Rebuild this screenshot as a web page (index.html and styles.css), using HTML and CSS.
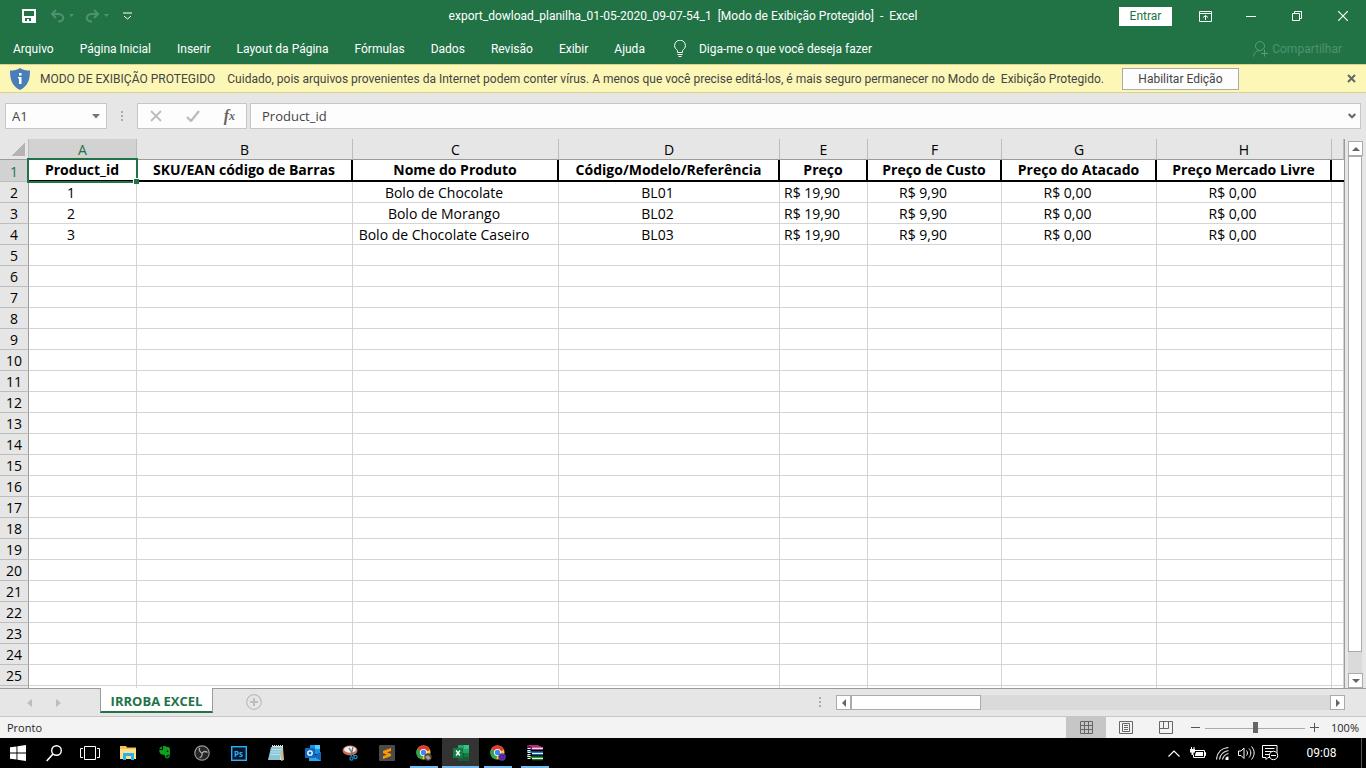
FILE: index.html
```html
<!DOCTYPE html>
<html lang="pt-BR">
<head>
<meta charset="utf-8">
<title>export_dowload_planilha_01-05-2020_09-07-54_1 - Excel</title>
<link rel="stylesheet" href="styles.css">
</head>
<body>
<div class="screen">
  <header class="titlebar">
    <div class="quick">
      <button class="icon-btn save" aria-label="Salvar"><svg width="14" height="14" viewBox="0 0 14 14"><path fill="#fff" fill-rule="evenodd" d="M0 0h14v14H1l-1-1zM2 2v5h10V2zM3 9v3h2v-2h2v2h2V9z"/></svg></button>
      <button class="icon-btn undo" aria-label="Desfazer"><svg width="25" height="14" viewBox="0 0 25 14"><path d="M6 1 2 5l4 4M2 5h6c7 0 7 8 0 7.500" fill="none" stroke="#4f9270" stroke-width="2"/><path d="M19 5h5l-2.500 3z" fill="#4f9270"/></svg></button>
      <button class="icon-btn redo" aria-label="Refazer"><svg width="25" height="14" viewBox="0 0 25 14"><path d="M9 1l4 4-4 4M13 5H7c-7 0-7 8 0 7.500" fill="none" stroke="#4f9270" stroke-width="2"/><path d="M19 5h5l-2.500 3z" fill="#4f9270"/></svg></button>
      <button class="icon-btn custom" aria-label="Personalizar"><svg width="9" height="8" viewBox="0 0 9 8"><path d="M0 1h9M1 4l3.500 3L8 4" fill="none" stroke="#fff"/></svg></button>
    </div>
    <h1 class="doc-title">export_dowload_planilha_01-05-2020_09-07-54_1 &nbsp;[Modo de Exibição Protegido] &nbsp;- &nbsp;Excel</h1>
    <div class="window-tools">
      <button class="signin">Entrar</button>
      <button class="win-btn" aria-label="Opções da faixa"><svg width="13" height="11" viewBox="0 0 13 11"><path d="M.5.500h12v10H.500zM.500 2.500h12M6.500 9V4.500M4 6.500l2.500-2L9 6.500" fill="none" stroke="#fff"/></svg></button>
      <button class="win-btn" aria-label="Minimizar"><svg width="10" height="10" viewBox="0 0 10 10"><path d="M0 5.500h10" stroke="#fff"/></svg></button>
      <button class="win-btn" aria-label="Restaurar"><svg width="10" height="10" viewBox="0 0 10 10"><path d="M.5 2.500h7v7h-7zM2.500 2.500v-2h7v7h-2" fill="none" stroke="#fff"/></svg></button>
      <button class="win-btn" aria-label="Fechar"><svg width="10" height="10" viewBox="0 0 10 10"><path d="M0 0l10 10M10 0L0 10" stroke="#fff" stroke-width="1.200"/></svg></button>
    </div>
  </header>

  <nav class="ribbon">
    <button class="tab">Arquivo</button>
    <button class="tab">Página Inicial</button>
    <button class="tab">Inserir</button>
    <button class="tab">Layout da Página</button>
    <button class="tab">Fórmulas</button>
    <button class="tab">Dados</button>
    <button class="tab">Revisão</button>
    <button class="tab">Exibir</button>
    <button class="tab">Ajuda</button>
    <button class="tab tell"><svg width="12" height="17" viewBox="0 0 12 17"><path d="M3.500 12.500V10.500C2 9 .600 8 .600 5.500a5.200 5.200 0 0 1 10.800 0C11.400 8 10 9 8.500 10.500v2zM3.500 14.500h5M4.500 16.500h3" fill="none" stroke="#fff"/></svg>Diga-me o que você deseja fazer</button>
    <button class="share" disabled><svg width="15" height="16" viewBox="0 0 15 16"><circle cx="7" cy="5" r="4.500" fill="none" stroke="#5b9a7a"/><path d="M.5 15.500C1 12 3 10 6 9.500M11.500 8.500v7M8 12.500h7" fill="none" stroke="#5b9a7a"/></svg>Compartilhar</button>
  </nav>

  <div class="notice">
    <svg class="shield" width="20" height="22" viewBox="0 0 20 22"><path d="M10 0c3 2 6 2.500 10 2.500C20 12 18 18 10 22 2 18 0 12 0 2.500 4 2.500 7 2 10 0z" fill="#4a7ebb"/><path d="M9 5h2.500v2.500H9zM8 9h3.500v7H9v-5.500H8z" fill="#fff"/></svg>
    <span class="notice-title">MODO DE EXIBIÇÃO PROTEGIDO</span>
    <span class="notice-text">Cuidado, pois arquivos provenientes da Internet podem conter vírus. A menos que você precise editá-los, é mais seguro permanecer no Modo de &nbsp;Exibição Protegido.</span>
    <button class="enable">Habilitar Edição</button>
    <button class="notice-close" aria-label="Fechar aviso"><svg width="9" height="9" viewBox="0 0 9 9"><path d="M1 1l7 7M8 1L1 8" stroke="#666" stroke-width="2"/></svg></button>
  </div>

  <div class="formula-row">
    <div class="namebox"><input class="name-input" type="text" value="A1" aria-label="Caixa de nome"><button class="icon-btn" aria-label="Abrir lista"><svg width="8" height="5" viewBox="0 0 8 5"><path d="M0 0h8L4 4.500z" fill="#777"/></svg></button></div>
    <span class="dots"></span>
    <div class="fx-box">
      <button class="icon-btn" aria-label="Cancelar"><svg width="12" height="12" viewBox="0 0 12 12"><path d="M1 1l10 10M11 1L1 11" stroke="#bdbdbd" stroke-width="1.800"/></svg></button>
      <button class="icon-btn" aria-label="Inserir"><svg width="14" height="12" viewBox="0 0 14 12"><path d="M1 7l4 4 8-10" fill="none" stroke="#bdbdbd" stroke-width="2.400"/></svg></button>
      <button class="icon-btn fx" aria-label="Inserir função">f<small>x</small></button>
    </div>
    <div class="formula"><input class="formula-input" type="text" value="Product_id" aria-label="Barra de fórmulas"><button class="icon-btn" aria-label="Expandir"><svg width="8" height="6" viewBox="0 0 8 6"><path d="M.7 1L4 4.300 7.300 1" fill="none" stroke="#666" stroke-width="2"/></svg></button></div>
  </div>

  <main class="work">
    <div class="grid-view">
      <table class="sheet">
        <colgroup><col class="c-n"><col class="c-a"><col class="c-b"><col class="c-c"><col class="c-d"><col class="c-e"><col class="c-f"><col class="c-g"><col class="c-h"><col></colgroup>
        <thead><tr><th class="corner"></th><th class="on">A</th><th>B</th><th>C</th><th>D</th><th>E</th><th>F</th><th>G</th><th>H</th><th></th></tr></thead>
        <tbody id="rows">
          <tr class="titles"><th class="on">1</th><td class="selected">Product_id<span class="handle"></span></td><td>SKU/EAN código de Barras</td><td>Nome do Produto</td><td>Código/Modelo/Referência</td><td>Preço</td><td>Preço de Custo</td><td>Preço do Atacado</td><td>Preço Mercado Livre</td><td></td></tr>
          <tr><th>2</th><td>1</td><td></td><td>Bolo de Chocolate</td><td>BL01</td><td>R$ 19,90</td><td>R$ 9,90</td><td>R$ 0,00</td><td>R$ 0,00</td><td></td></tr>
          <tr><th>3</th><td>2</td><td></td><td>Bolo de Morango</td><td>BL02</td><td>R$ 19,90</td><td>R$ 9,90</td><td>R$ 0,00</td><td>R$ 0,00</td><td></td></tr>
          <tr><th>4</th><td>3</td><td></td><td>Bolo de Chocolate Caseiro</td><td>BL03</td><td>R$ 19,90</td><td>R$ 9,90</td><td>R$ 0,00</td><td>R$ 0,00</td><td></td></tr>
        </tbody>
      </table>
    </div>
    <div class="vscroll">
      <button class="sb-btn" aria-label="Acima"><svg width="8" height="4" viewBox="0 0 8 4"><path d="M0 4h8L4 0z" fill="#666"/></svg></button>
      <div class="v-track"><div class="v-thumb"></div></div>
      <button class="sb-btn" aria-label="Abaixo"><svg width="8" height="4" viewBox="0 0 8 4"><path d="M0 0h8L4 4z" fill="#666"/></svg></button>
    </div>
  </main>

  <div class="sheetbar">
    <div class="sheet-nav"><svg width="5" height="8" viewBox="0 0 5 8"><path d="M5 0v8L0 4z" fill="#bdbdbd"/></svg><svg width="5" height="8" viewBox="0 0 5 8"><path d="M0 0v8l5-4z" fill="#bdbdbd"/></svg></div>
    <button class="sheet-tab">IRROBA EXCEL</button>
    <button class="icon-btn add" aria-label="Nova planilha"><svg width="16" height="16" viewBox="0 0 16 16"><circle cx="8" cy="8" r="7.300" fill="none" stroke="#bdbdbd" stroke-width="1.200"/><path d="M8 4v8M4 8h8" stroke="#bdbdbd" stroke-width="2"/></svg></button>
    <span class="dots"></span>
    <div class="hscroll">
      <button class="sb-btn" aria-label="Esquerda"><svg width="4" height="8" viewBox="0 0 4 8"><path d="M4 0v8L0 4z" fill="#666"/></svg></button>
      <div class="h-track"><div class="h-thumb"></div></div>
      <button class="sb-btn" aria-label="Direita"><svg width="4" height="8" viewBox="0 0 4 8"><path d="M0 0v8l4-4z" fill="#666"/></svg></button>
    </div>
  </div>

  <footer class="status">
    <span class="ready">Pronto</span>
    <button class="view active" aria-label="Normal"><svg width="13" height="13" viewBox="0 0 13 13"><path d="M.5.500h12v12H.500zM4.500 0v13M8.500 0v13M0 4.500h13M0 8.500h13" fill="none" stroke="#666"/></svg></button>
    <button class="view" aria-label="Layout da Página"><svg width="14" height="13" viewBox="0 0 14 13"><path d="M.5.500h13v12H.500zM3.500 2.500h7v8h-7zM5 4.500h4M5 6.500h4M5 8.500h4" fill="none" stroke="#666"/></svg></button>
    <button class="view" aria-label="Quebra de Página"><svg width="14" height="13" viewBox="0 0 14 13"><path d="M.5.500h13v12H.500zM4.500 0v7.500M9.500 0v7.500M0 7.500h9.500" fill="none" stroke="#666"/></svg></button>
    <button class="zoom-btn" aria-label="Reduzir"><svg width="9" height="9" viewBox="0 0 9 9"><path d="M0 4.500h9" stroke="#555"/></svg></button>
    <input class="zoom" type="range" min="0" max="100" value="51" aria-label="Zoom">
    <button class="zoom-btn" aria-label="Ampliar"><svg width="9" height="9" viewBox="0 0 9 9"><path d="M0 4.500h9M4.500 0v9" stroke="#555"/></svg></button>
    <span class="zoom-value">100%</span>
  </footer>

  <div class="taskbar">
    <div class="system">
      <button class="task" aria-label="Iniciar"><svg width="16" height="16" viewBox="0 0 16 16"><path d="M0 2.300L6.500 1.400V7.600H0zM7.400 1.200L16 0v7.600H7.400zM0 8.400h6.500v6.200L0 13.700zM7.400 8.400H16V16l-8.600-1.200z" fill="#fff"/></svg></button>
      <button class="task" aria-label="Pesquisar"><svg width="16" height="17" viewBox="0 0 16 17"><circle cx="10.500" cy="5.500" r="4.800" fill="none" stroke="#fff" stroke-width="1.400"/><path d="M7 9L.700 16" stroke="#fff" stroke-width="1.600"/></svg></button>
      <button class="task" aria-label="Visão de tarefas"><svg width="20" height="14" viewBox="0 0 20 14"><path d="M4.500.500h11v13h-11zM3 2.500H.500v9H3M17 2.500h2.500v9H17" fill="none" stroke="#fff"/></svg></button>
    </div>
    <button class="task" aria-label="Explorador"><svg width="16" height="14" viewBox="0 0 16 14"><path d="M0 0h6l1 1.500h9V13H0z" fill="#f5c24a"/><path d="M0 3h16v10H0z" fill="#ffe08a"/><path d="M3 7h11v7h-3v-4H6v4H3z" fill="#25b3ee"/></svg></button>
    <button class="task" aria-label="Evernote"><svg width="12" height="14" viewBox="0 0 12 14"><path d="M4 0h2.500l1 1h2C11 1.500 11 3 11 6c0 3-.5 6.500-2.500 6.500C6.500 12.500 6 11.500 6 9.500 5 8.500 4 9 2.500 8.500 1 8 .2 6 .2 4H4z" fill="#0ea01c"/><path d="M0 3l3-3v3z" fill="#0ea01c"/><path d="M10 9.500c-1.500-.8-2.500 0-2.300 1.300h1.500" fill="none" stroke="#000" stroke-width=".8"/><circle cx="8.500" cy="5.300" r=".8" fill="#000"/></svg></button>
    <button class="task" aria-label="OBS"><svg width="16" height="16" viewBox="0 0 16 16"><circle cx="8" cy="8" r="7.200" fill="#252525" stroke="#999" stroke-width="1.200"/><path d="M5.500 2.800C5 5 6 7 8 8c1.500-1.500 3.500-2 5.500-.5M8 8c.5 2.200-.5 4-2.500 5" fill="none" stroke="#aaa" stroke-width="1.300"/></svg></button>
    <button class="task" aria-label="Photoshop"><svg width="16" height="15" viewBox="0 0 16 15"><rect x=".7" y=".7" width="14.600" height="13.600" fill="#07162c" stroke="#2cb1f2" stroke-width="1.400"/><text x="3" y="11" class="ps">Ps</text></svg></button>
    <button class="task" aria-label="Bloco de notas"><svg width="16" height="16" viewBox="0 0 16 16"><path d="M4 1h11v14H5z" fill="#f3ecd2"/><path d="M15 2l1 13-3 1V6z" fill="#cdb88c"/><path d="M3 2h11l-2 13H0z" fill="#8bc5d8"/><path d="M3.500 4.500h10M3 7h10M2.500 9.500h10" stroke="#b9e2ed"/><path d="M4 1h12" stroke="#ddd" stroke-width="2" stroke-dasharray="1 1"/></svg></button>
    <button class="task" aria-label="Outlook"><svg width="16" height="16" viewBox="0 0 16 16"><path d="M5 0h10v9H5z" fill="#1b8fe0"/><path d="M10 0h5v4h-5z" fill="#50d0ff"/><path d="M4 7l6 4 6-4v9H4z" fill="#2aa5ea"/><path d="M16 7v9L8 11z" fill="#1467b8"/><path d="M0 3h10v10H0z" fill="#0e69c4"/><circle cx="5" cy="8" r="2.200" fill="none" stroke="#fff" stroke-width="1.300"/></svg></button>
    <button class="task" aria-label="Captura"><svg width="16" height="16" viewBox="0 0 16 16"><ellipse cx="8" cy="5.500" rx="7.500" ry="5" fill="#c96b54"/><ellipse cx="8" cy="4.500" rx="6" ry="3.200" fill="#eee"/><path d="M7 3l5 8M11 2l-2 9" stroke="#777" stroke-width="1.300"/><circle cx="9.500" cy="13.500" r="1.600" fill="none" stroke="#128dd0" stroke-width="1.200"/><circle cx="13.500" cy="12" r="1.600" fill="none" stroke="#128dd0" stroke-width="1.200"/></svg></button>
    <button class="task" aria-label="Sublime"><svg width="16" height="16" viewBox="0 0 16 16"><rect width="16" height="16" rx="1" fill="#4b4b4b"/><path d="M12 3v3L8 7.300 12 9v2l-8 3v-3l4-1.300L4 8V6z" fill="#ff9800"/></svg></button>
    <button class="task open" aria-label="Chrome"><svg width="16" height="16" viewBox="0 0 16 16"><circle cx="7.500" cy="7.500" r="7" fill="#fbc928"/><path d="M7.500 7.500L1.200 4A7 7 0 0 1 14 5z" fill="#e33b2e"/><path d="M7.500 7.500L1.200 4a7 7 0 0 0 5.300 10.500z" fill="#2da44e"/><circle cx="7.500" cy="7.500" r="3.600" fill="#fff"/><circle cx="7.500" cy="7.500" r="2.700" fill="#4285f4"/><circle cx="12" cy="12" r="3.700" fill="#4d443f"/><path d="M9 12l3-2 3 3-3 2z" fill="#b09b8e"/></svg></button>
    <button class="task open current" aria-label="Excel"><svg width="16" height="16" viewBox="0 0 16 16"><path d="M5 0h11v16H5z" fill="#21a366"/><path d="M5 0h6v4H5z" fill="#26a56b"/><path d="M11 0h5v4h-5z" fill="#33c481"/><path d="M5 8h11v8H5z" fill="#185c37"/><path d="M11 8h5v4h-5z" fill="#107c41"/><path d="M0 3h10v10H0z" fill="#107c41"/><path d="M3 5.500l4 5M7 5.500l-4 5" stroke="#fff" stroke-width="1.400"/></svg></button>
    <button class="task open" aria-label="Chrome"><svg width="16" height="16" viewBox="0 0 16 16"><circle cx="7.500" cy="7.500" r="7" fill="#fbc928"/><path d="M7.500 7.500L1.200 4A7 7 0 0 1 14 5z" fill="#e33b2e"/><path d="M7.500 7.500L1.200 4a7 7 0 0 0 5.300 10.500z" fill="#2da44e"/><circle cx="7.500" cy="7.500" r="3.600" fill="#fff"/><circle cx="7.500" cy="7.500" r="2.700" fill="#4285f4"/><circle cx="12" cy="12" r="3.700" fill="#5b36b0"/><circle cx="12" cy="12" r="1.800" fill="none" stroke="#3f2390"/></svg></button>
    <button class="task open" aria-label="WinRAR"><svg width="16" height="16" viewBox="0 0 16 16"><path d="M0 0h11l5 2.500H5z" fill="#b52a7c"/><path d="M0 0l5 2.500V5L0 3z" fill="#7a1750"/><path d="M5 2.500h11V4H5z" fill="#f2d9e6"/><path d="M5 4h11v1H5z" fill="#b52a7c"/><path d="M0 5l5 1.500h11V8H5L0 7z" fill="#1e7fd0"/><path d="M5 8h11v1.300H5z" fill="#e3f1ff"/><path d="M5 9.300h11v1H5z" fill="#1668b8"/><path d="M0 10l5 1.500h11V13H5l-5-1z" fill="#2f9a34"/><path d="M5 13h11v1.300H5z" fill="#e6f7e0"/><path d="M5 14.300h11v1H5z" fill="#1f7a24"/><path d="M2 3v12" stroke="#fff" stroke-width="3" stroke-dasharray="1 1"/></svg></button>

    <div class="tray">
      <button class="tray-btn" aria-label="Ícones ocultos"><svg width="12" height="7" viewBox="0 0 12 7"><path d="M.5 6.500L6 1l5.500 5.500" fill="none" stroke="#fff" stroke-width="1.200"/></svg></button>
      <button class="tray-btn" aria-label="Bateria"><svg width="16" height="12" viewBox="0 0 16 12"><path d="M4.500 3.500h10v7H3.500V8M14.500 5.500h1v3h-1" fill="none" stroke="#fff"/><path d="M6 5h7v4H5V8zM0 2h5v3.500H3.500V8h-2V5.500H0zM1 0h1v2H1zM3.500 0h1v2h-1z" fill="#fff"/></svg></button>
      <button class="tray-btn" aria-label="Rede"><svg width="13" height="13" viewBox="0 0 13 13"><path d="M.5 12.500C1 5 6 1 12.500.500M3.500 12.500C4 7 8 4.500 12.500 3.500M6.500 12.500C7 9.500 9 7.500 12.500 6.500" fill="none" stroke="#ddd" stroke-width="1.200"/><path d="M9.500 13V11c.500-1 1.500-1.500 3-1.500V13z" fill="#fff"/></svg></button>
      <button class="tray-btn" aria-label="Volume"><svg width="17" height="14" viewBox="0 0 17 14"><path d="M.5 5h2.500l3-3v10.500l-3-3H.500zM8.500 4.500c1.300 1.500 1.300 3.500 0 5M11 2.500c2.400 2.500 2.400 6.500 0 9M13.500.500c3.500 4 3.500 9 0 13" fill="none" stroke="#fff"/></svg></button>
      <button class="tray-btn" aria-label="Notificações"><svg width="17" height="16" viewBox="0 0 17 16"><path d="M8 12.500H6l-2 2v-2H.500V.500h14.500V8M3 3.500h9.500M3 6.500h7M3 9.500h4" fill="none" stroke="#fff"/><circle cx="11.500" cy="10.500" r="4.200" fill="#000" stroke="#fff"/><path d="M9 10.500h5" stroke="#fff"/></svg></button>
      <time class="clock">09:08</time>
      <span class="peek"></span>
    </div>
  </div>
</div>
<script src="sheet.js"></script>
</body>
</html>
```

FILE: sheet.js
```js
// Fill the rest of the sheet with empty rows; the last one only peeks out.
const rows = document.getElementById("rows");
for (let n = 5; n <= 26; n++) {
  const tr = document.createElement("tr");
  const th = document.createElement("th");
  if (n < 26) th.textContent = n;
  tr.append(th);
  for (let c = 0; c < 9; c++) tr.append(document.createElement("td"));
  rows.append(tr);
}
```

FILE: styles.css
```css
* { box-sizing: border-box; }
body {
  margin: 0;
  font-family: Roboto, "Open Sans", sans-serif;
  font-size: 12px;
  color: #262626;
}
button, input {
  font: inherit;
  color: inherit;
  margin: 0;
  padding: 0;
  border: 0;
  background: none;
  white-space: nowrap;
}
svg { display: block; flex: none; }
.screen { height: 100vh; display: flex; flex-direction: column; overflow: hidden; background: #e6e6e6; }
.screen > * { flex: none; }
.icon-btn { display: flex; align-items: center; justify-content: center; }

/* title bar */
.titlebar { height: 32px; background: #217346; color: #fff; display: grid; grid-template-columns: 1fr auto 1fr; align-items: center; }
.quick { display: flex; align-items: center; padding-left: 22px; }
.save { margin-right: 14px; }
.undo { margin-right: 10px; }
.redo { margin-right: 13px; }
.doc-title { margin: 0; font-size: 12px; font-weight: 400; white-space: nowrap; }
.window-tools { display: flex; align-items: center; justify-content: flex-end; }
.signin { width: 53px; height: 19px; background: #fff; color: #217346; margin-right: 10px; }
.win-btn { width: 46px; height: 32px; display: flex; align-items: center; justify-content: center; }

/* ribbon tabs */
.ribbon { height: 32px; background: #217346; color: #fff; display: flex; align-items: center; gap: 26px; padding: 1px 24px 0 13px; }
.tell { display: flex; align-items: center; gap: 13px; margin-left: 3px; }
.share { display: flex; align-items: center; gap: 4px; margin-left: auto; color: #4f9270; }

/* protected view notice */
.notice { height: 29px; background: #fcf7b6; border-top: 1px solid #d8d58a; border-bottom: 1px solid #d8d58a; display: flex; align-items: center; padding: 0 10px; color: #444; white-space: nowrap; }
.shield { margin-right: 10px; }
.notice-title { margin-right: 12px; }
.enable { width: 117px; height: 22px; border: 1px solid #ababab; background: #fdfdfd; margin-left: 18px; }
.notice-close { margin-left: auto; }

/* formula bar */
.formula-row { display: flex; align-items: center; padding: 10px 5px; color: #444; font-family: "Open Sans", "Noto Sans", sans-serif; }
.namebox, .fx-box, .formula { height: 26px; background: #fdfdfd; border: 1px solid #c6c6c6; display: flex; align-items: center; }
.namebox { width: 102px; padding: 0 6px; }
.name-input { flex: 1; min-width: 0; font-size: 13px; }
.dots { width: 2px; height: 11px; background: repeating-linear-gradient(#ababab 0 2px, transparent 2px 4px); }
.formula-row .dots { margin: 0 14px; }
.fx-box { width: 110px; justify-content: space-between; padding: 0 11px 0 12px; margin-right: 3px; }
.fx { font-family: "Liberation Serif", serif; font-style: italic; font-weight: 700; font-size: 16px; color: #666; }
.fx small { font-size: 12px; }
.formula { flex: 1; padding: 0 4px 0 11px; }
.formula-input { flex: 1; min-width: 0; font-size: 13px; }

/* worksheet */
.work.work { flex: 1; min-height: 0; display: flex; }
.grid-view { flex: 1; min-width: 0; overflow: hidden; border-right: 1px solid #9b9b9b; }
.sheet { width: 100%; table-layout: fixed; border-collapse: separate; border-spacing: 0; font-family: "Open Sans", "Noto Sans", sans-serif; font-size: 14px; line-height: 19px; color: #000; }
.c-n { width: 29px; }
.c-a { width: 108px; }
.c-b { width: 216px; }
.c-c { width: 206px; }
.c-d { width: 221px; }
.c-e { width: 88px; }
.c-f { width: 134px; }
.c-g { width: 155px; }
.c-h { width: 175px; }
.sheet th, .sheet td { height: 21px; padding: 1px 0 0; text-align: center; white-space: nowrap; border-right: 1px solid #d4d4d4; border-bottom: 1px solid #d4d4d4; }
.sheet th { font-weight: 400; background: #e6e6e6; border-color: #bdbdbd; }
.sheet td { background: #fff; padding-right: 23px; }
.sheet tbody th { border-right-color: #9b9b9b; }
.sheet thead th { border-bottom-color: #9b9b9b; }
.sheet .on { background: #d2d2d2; color: #217346; }
.sheet .corner { background: linear-gradient(135deg, transparent 50%, #b4b4b4 50%) 12px 4px / 13px 13px no-repeat #e6e6e6; }
.sheet .titles td { height: 22px; padding: 0; vertical-align: top; font-weight: 700; border-right: 2px solid #000; border-bottom: 2px solid #000; }
.sheet .titles td:last-child { border-right: 0; }
.sheet .titles .selected { position: relative; border-right-color: #fff; }
.selected::before { content: ""; position: absolute; inset: -2px -3px -3px -2px; border: 2px solid #217346; }
.handle { position: absolute; right: -4px; bottom: -4px; width: 6px; height: 6px; background: #217346; border: 1px solid #fff; border-width: 1px 0 0 1px; }

/* scroll bars */
.vscroll { width: 21px; padding: 2px 4px 0 3px; display: flex; flex-direction: column; }
.sb-btn { width: 15px; height: 15px; flex: none; background: #fff; border: 1px solid #ababab; display: flex; align-items: center; justify-content: center; }
.v-track { flex: 1; background: #dadada; }
.v-thumb { height: 96%; background: #fff; border: 1px solid #ababab; }

/* sheet tabs */
.sheetbar { height: 28px; border-top: 1px solid #9b9b9b; display: flex; align-items: flex-start; padding-right: 21px; }
.sheet-nav { width: 100px; height: 27px; display: flex; align-items: center; gap: 24px; padding-left: 27px; }
.sheet-tab { width: 113px; height: 25px; padding-top: 2px; margin-top: -1px; background: #fff; border: 1px solid #9b9b9b; border-width: 0 1px 2px; border-bottom-color: #217346; color: #217346; font-family: "Open Sans", "Noto Sans", sans-serif; font-weight: 700; font-size: 13px; }
.add { margin: 5px auto 0 33px; }
.sheetbar .dots { margin: 8px 15px 0 0; }
.hscroll { width: 509px; margin-top: 6px; display: flex; }
.h-track { flex: 1; background: #dadada; }
.h-thumb { width: 130px; height: 15px; background: #fff; border: 1px solid #ababab; }

/* status bar */
.status { height: 22px; background: #f3f3f3; border-top: 1px solid #c6c6c6; display: flex; align-items: center; padding: 0 7px; font-family: "Open Sans", "Noto Sans", sans-serif; font-size: 11px; }
.ready { margin-right: auto; }
.view { width: 40px; height: 21px; display: flex; align-items: center; justify-content: center; }
.view.active { background: #c6c6c6; }
.zoom-btn { width: 9px; display: flex; align-items: center; }
.view + .zoom-btn { margin-left: 5px; }
.zoom { appearance: none; width: 100px; height: 12px; margin: 0 5px; background: linear-gradient(#ababab, #ababab) 0 6px / 100% 1px no-repeat; }
.zoom::-webkit-slider-thumb { appearance: none; width: 5px; height: 11px; background: #666; }
.zoom-value { width: 40px; text-align: right; }

/* task bar */
.taskbar { height: 30px; background: #000; color: #fff; display: flex; }
.system { display: flex; margin-right: 1px; }
.task { width: 37px; height: 30px; display: flex; align-items: center; justify-content: center; }
.system .task { width: 36px; }
.task.open { background: linear-gradient(#76b9ed, #76b9ed) center bottom / 28px 2px no-repeat; }
.task.current { background: linear-gradient(#76b9ed, #76b9ed) center bottom / 100% 2px no-repeat #333; }
.ps { font: 700 8px "Open Sans", sans-serif; fill: #2cb1f2; }
.tray { margin-left: auto; display: flex; align-items: center; padding-right: 4px; }
.tray-btn { width: 24px; height: 30px; display: flex; align-items: center; justify-content: center; }
.clock { width: 79px; text-align: center; font-size: 12px; }
.peek { width: 1px; height: 30px; background: #555; }
```
